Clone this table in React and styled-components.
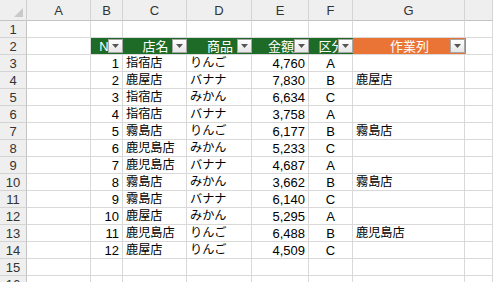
import styled, { createGlobalStyle } from "styled-components";

const GlobalStyle = createGlobalStyle`
  html, body {
    margin: 0;
    padding: 0;
    background: #ffffff;
  }
  body {
    font-family: "Liberation Sans", "Noto Sans CJK JP", sans-serif;
  }
`;

const COLUMNS = ["A", "B", "C", "D", "E", "F", "G", ""];

const rows = [
  [1, "指宿店", "りんご", "4,760", "A", ""],
  [2, "鹿屋店", "バナナ", "7,830", "B", "鹿屋店"],
  [3, "指宿店", "みかん", "6,634", "C", ""],
  [4, "指宿店", "バナナ", "3,758", "A", ""],
  [5, "霧島店", "りんご", "6,177", "B", "霧島店"],
  [6, "鹿児島店", "みかん", "5,233", "C", ""],
  [7, "鹿児島店", "バナナ", "4,687", "A", ""],
  [8, "霧島店", "みかん", "3,662", "B", "霧島店"],
  [9, "霧島店", "バナナ", "6,140", "C", ""],
  [10, "鹿屋店", "みかん", "5,295", "A", ""],
  [11, "鹿児島店", "りんご", "6,488", "B", "鹿児島店"],
  [12, "鹿屋店", "りんご", "4,509", "C", ""],
];

const tableHeads = [
  { label: "No", fill: "#1e6b28" },
  { label: "店名", fill: "#1e6b28" },
  { label: "商品", fill: "#1e6b28" },
  { label: "金額", fill: "#1e6b28" },
  { label: "区分", fill: "#1e6b28" },
  { label: "作業列", fill: "#ea7435" },
];

export default function App() {
  return (
    <>
      <GlobalStyle />
      <Sheet>
        <Corner>
          <CornerMark />
        </Corner>
        {COLUMNS.map((c, i) => (
          <ColHead key={"h" + i}>{c}</ColHead>
        ))}

        <RowHead>1</RowHead>
        {COLUMNS.map((_, i) => (
          <Cell key={"r1" + i} />
        ))}

        <RowHead>2</RowHead>
        <Cell />
        {tableHeads.map((h) => (
          <HeadCell key={h.label} $fill={h.fill}>
            <span>{h.label}</span>
            <FilterButton>
              <svg width="7" height="4" viewBox="0 0 7 4">
                <path d="M0 0h7L3.5 4z" fill="#555" />
              </svg>
            </FilterButton>
          </HeadCell>
        ))}
        <Cell />

        {rows.map((r, i) => (
          <Row key={r[0]} r={r} n={i + 3} />
        ))}

        {[15, 16].map((n) => (
          <Blank key={n} n={n} />
        ))}
      </Sheet>
    </>
  );
}

function Row({ r, n }) {
  return (
    <>
      <RowHead>{n}</RowHead>
      <Cell />
      <Cell $align="right">{r[0]}</Cell>
      <Cell $cjk>{r[1]}</Cell>
      <Cell $cjk>{r[2]}</Cell>
      <Cell $align="right">{r[3]}</Cell>
      <Cell $align="center">{r[4]}</Cell>
      <Cell $cjk>{r[5]}</Cell>
      <Cell />
    </>
  );
}

function Blank({ n }) {
  return (
    <>
      <RowHead>{n}</RowHead>
      {COLUMNS.map((_, i) => (
        <Cell key={i} />
      ))}
    </>
  );
}

const Sheet = styled.div`
  display: grid;
  grid-template-columns: 27px 64px 32px 64px 65px 57px 44px 112px 1fr;
  grid-auto-rows: 17px;
  grid-template-rows: 21px;
  width: 493px;
  height: 282px;
  overflow: hidden;
  font-size: 13px;
  color: #000;
`;

const Corner = styled.div`
  position: relative;
  background: #efefef;
  border-right: 1px solid #cfcfcf;
  border-bottom: 1px solid #c4c4c4;
`;

const CornerMark = styled.div`
  position: absolute;
  right: 3px;
  bottom: 3px;
  width: 0;
  height: 0;
  border-left: 9px solid transparent;
  border-bottom: 9px solid #c9c9c9;
`;

const ColHead = styled.div`
  background: #efefef;
  border-right: 1px solid #d4d4d4;
  border-bottom: 1px solid #c4c4c4;
  display: flex;
  align-items: center;
  justify-content: center;
  color: #333;
  font-size: 13px;
`;

const RowHead = styled.div`
  background: #efefef;
  border-right: 1px solid #c4c4c4;
  border-bottom: 1px solid #d4d4d4;
  display: flex;
  align-items: center;
  justify-content: center;
  color: #333;
  font-size: 13px;
`;

const Cell = styled.div`
  border-right: 1px solid #d9d9d9;
  border-bottom: 1px solid #d9d9d9;
  display: flex;
  align-items: center;
  justify-content: ${(p) =>
    p.$align === "right" ? "flex-end" : p.$align === "center" ? "center" : "flex-start"};
  padding: 0 3px;
  white-space: nowrap;
  overflow: hidden;
  line-height: 1;
  font-size: ${(p) => (p.$cjk ? "12.2px" : "13px")};
`;

const HeadCell = styled.div`
  position: relative;
  background: ${(p) => p.$fill};
  border-bottom: 1px solid #d9d9d9;
  display: flex;
  align-items: center;
  justify-content: center;
  color: #ffffff;
  white-space: nowrap;
  overflow: hidden;
  line-height: 1;
  margin-right: -1px;
  z-index: 0;
`;

const FilterButton = styled.div`
  position: absolute;
  right: 1px;
  top: 1px;
  width: 15px;
  height: 14px;
  box-sizing: border-box;
  border: 1px solid #a6a6a6;
  background: linear-gradient(#ffffff, #e6e6e6);
  display: flex;
  align-items: center;
  justify-content: center;
`;
